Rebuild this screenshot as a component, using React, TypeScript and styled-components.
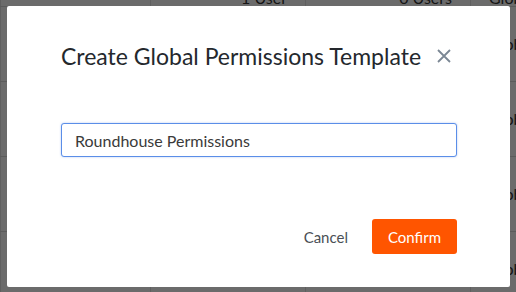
import React from 'react';
import styled, { createGlobalStyle } from 'styled-components';

const GlobalStyle = createGlobalStyle`
  html, body { margin: 0; padding: 0; }
  body {
    width: 516px;
    height: 292px;
    overflow: hidden;
    font-family: Lato, "Open Sans", sans-serif;
    background: #ffffff;
  }
`;

const Page = styled.div`
  position: relative;
  width: 516px;
  height: 292px;
  overflow: hidden;
`;

const Table = styled.div`
  display: flex;
  flex-direction: column;
`;

const Row = styled.div<{ short?: boolean }>`
  display: grid;
  grid-template-columns: 150px 155px 165px 120px;
  height: ${(p) => (p.short ? '7px' : '75px')};
  box-sizing: border-box;
  border-bottom: 1px solid #d8d8d8;
`;

const Cell = styled.div<{ align?: string; valign?: string }>`
  display: flex;
  align-items: ${(p) => p.valign || 'center'};
  justify-content: ${(p) => p.align || 'flex-start'};
  padding: 0 18px;
  border-left: 1px solid #e2e2e2;
  font-size: 16px;
  line-height: 16px;
  color: #333;
  white-space: nowrap;
  overflow: hidden;
`;

const Overlay = styled.div`
  position: absolute;
  inset: 0;
  background: rgba(0, 0, 0, 0.58);
`;

const Modal = styled.div`
  position: absolute;
  left: 7px;
  top: 6px;
  width: 503px;
  height: 281px;
  box-sizing: border-box;
  background: #ffffff;
  border-radius: 2px;
  padding: 34px 53px 0 54px;
  display: flex;
  flex-direction: column;
`;

const Header = styled.div`
  display: flex;
  align-items: center;
  gap: 15px;
  height: 32px;
`;

const Title = styled.h2`
  margin: 0;
  font-size: 23px;
  font-weight: 400;
  color: #24282d;
  line-height: 32px;
`;

const Close = styled.button`
  border: none;
  background: none;
  padding: 0;
  display: flex;
  color: #7b8794;
  cursor: pointer;
`;

const Input = styled.input`
  margin-top: 51px;
  height: 34px;
  box-sizing: border-box;
  border: 1px solid #5b8ee8;
  border-radius: 3px;
  padding: 0 13px;
  font-family: Lato, sans-serif;
  font-size: 16px;
  color: #3a3a3a;
  outline: none;
  box-shadow: 0 0 2px rgba(91, 142, 232, 0.5);
`;

const Footer = styled.div`
  margin-top: 62px;
  display: flex;
  justify-content: flex-end;
  align-items: center;
  gap: 24px;
`;

const Button = styled.button<{ primary?: boolean }>`
  height: 35px;
  padding: 0 ${(p) => (p.primary ? '16px' : '0')};
  border: none;
  border-radius: 3px;
  font-family: Lato, sans-serif;
  font-size: 15px;
  background: ${(p) => (p.primary ? '#ff5500' : 'transparent')};
  color: ${(p) => (p.primary ? '#ffffff' : '#4a4f55')};
  cursor: pointer;
`;

export default function App() {
  const rows = [0, 1, 2, 3];
  return (
    <Page>
      <GlobalStyle />
      <Table>
        <Row short>
          <Cell />
          <Cell align="flex-end" valign="flex-end">1 User</Cell>
          <Cell align="flex-end" valign="flex-end">0 Users</Cell>
          <Cell valign="flex-end">Global</Cell>
        </Row>
        {rows.map((r) => (
          <Row key={r}>
            <Cell />
            <Cell align="flex-end">1 User</Cell>
            <Cell align="flex-end">0 Users</Cell>
            <Cell>Global</Cell>
          </Row>
        ))}
      </Table>
      <Overlay>
        <Modal>
          <Header>
            <Title>Create Global Permissions Template</Title>
            <Close aria-label="close">
              <svg width="16" height="16" viewBox="0 0 16 16">
                <path d="M2 2 L14 14 M14 2 L2 14" stroke="currentColor" strokeWidth="1.8" />
              </svg>
            </Close>
          </Header>
          <Input defaultValue="Roundhouse Permissions" />
          <Footer>
            <Button>Cancel</Button>
            <Button primary>Confirm</Button>
          </Footer>
        </Modal>
      </Overlay>
    </Page>
  );
}
